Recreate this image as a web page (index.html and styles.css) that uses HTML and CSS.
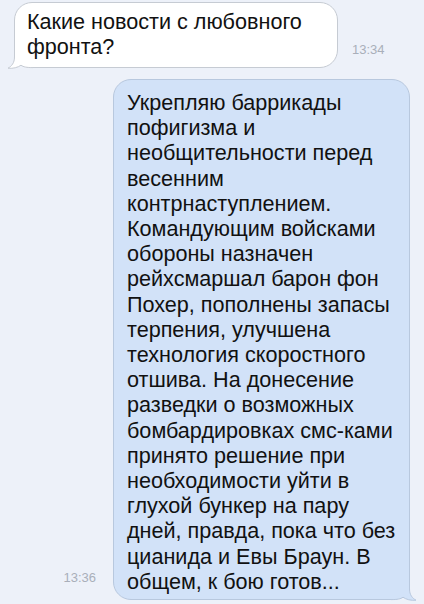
FILE: index.html
```html
<!DOCTYPE html>
<html lang="ru">
<head>
<meta charset="utf-8">
<title>Сообщения</title>
<link rel="stylesheet" href="styles.css">
</head>
<body>
<main class="thread">
  <div class="row row-in">
    <div class="bubble bubble-in">
      <svg class="tail tail-in" width="26" height="26" viewBox="0 0 26 26" aria-hidden="true">
        <path class="tail-fill" d="M7.5 4 L7.5 14 C7.5 20 4.5 23.3 1 25.2 C6 25.8 11 24.4 14 22.2 C16.5 24 19.5 24.6 26 24.6 L26 4 Z"/>
        <path class="tail-line" d="M7.5 4 L7.5 14 C7.5 20 4.5 23.3 1 25.2 C6 25.8 11 24.4 14 22.2 C16.5 24 19.5 24.6 26 24.6"/>
      </svg>
      <p class="text">Какие новости с любовного фронта?</p>
    </div>
    <span class="time">13:34</span>
  </div>

  <div class="row row-out">
    <span class="time">13:36</span>
    <div class="bubble bubble-out">
      <svg class="tail tail-out" width="26" height="26" viewBox="0 0 26 26" aria-hidden="true">
        <path class="tail-fill" d="M18.5 4 L18.5 14 C18.5 20 21.5 23.3 25 25.2 C20 25.8 15 24.4 12 22.2 C9.5 24 6.5 24.6 0 24.6 L0 4 Z"/>
        <path class="tail-line" d="M18.5 4 L18.5 14 C18.5 20 21.5 23.3 25 25.2 C20 25.8 15 24.4 12 22.2 C9.5 24 6.5 24.6 0 24.6"/>
      </svg>
      <p class="text">Укрепляю баррикады пофигизма и необщительности перед весенним контрнаступлением. Командующим войсками обороны назначен рейхсмаршал барон фон Похер, пополнены запасы терпения, улучшена технология скоростного отшива. На донесение разведки о возможных бомбардировках смс-ками принято решение при необходимости уйти в глухой бункер на пару дней, правда, пока что без цианида и Евы Браун. В общем, к бою готов...</p>
    </div>
  </div>
</main>
</body>
</html>
```

FILE: styles.css
```css
html, body {
  margin: 0;
  padding: 0;
}

body {
  background: #edf1f9;
  font-family: "Liberation Sans", Arial, Helvetica, sans-serif;
  color: #111;
  width: 424px;
  height: 604px;
  overflow: hidden;
}

.thread {
  display: flex;
  flex-direction: column;
  gap: 11px;
  padding: 2px 14px 0 14px;
}

.row {
  display: flex;
  align-items: flex-end;
}

.row-in {
  justify-content: flex-start;
  gap: 14px;
}

.row-out {
  justify-content: flex-end;
  gap: 17px;
}

.bubble {
  position: relative;
  box-sizing: border-box;
  border-radius: 18px;
}

.bubble-in {
  width: 324px;
  height: 66px;
  background: #ffffff;
  border: 1px solid #c6cbd3;
  padding: 6px 10px 0 12px;
}

.bubble-out {
  width: 297px;
  height: 521px;
  background: #d2e2f8;
  border: 1px solid #b8c8de;
  padding: 10px 8px 0 13px;
}

.text {
  position: relative;
  margin: 0;
  font-size: 21.6px;
  line-height: 25.2px;
}

.time {
  font-size: 13px;
  color: #a9afba;
  line-height: 16px;
}

.row-in .time {
  margin-bottom: 10px;
}

.row-out .time {
  margin-bottom: 14px;
}

.tail {
  position: absolute;
  bottom: -2px;
}

.tail-in {
  left: -8px;
}

.tail-out {
  right: -8px;
}

.tail-in .tail-fill {
  fill: #ffffff;
}

.tail-in .tail-line {
  fill: none;
  stroke: #c6cbd3;
  stroke-width: 1;
}

.tail-out .tail-fill {
  fill: #d2e2f8;
}

.tail-out .tail-line {
  fill: none;
  stroke: #b8c8de;
  stroke-width: 1;
}
```
